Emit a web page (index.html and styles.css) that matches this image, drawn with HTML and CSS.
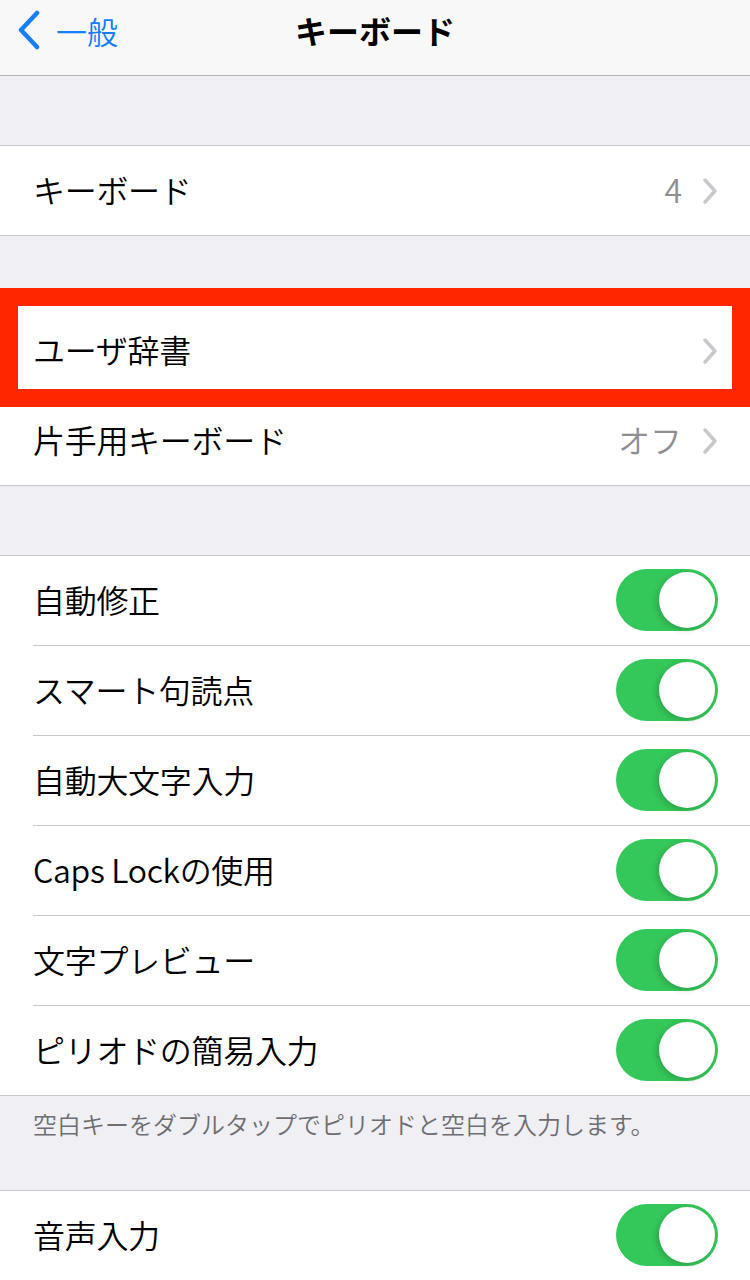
FILE: index.html
```html
<!DOCTYPE html>
<html lang="ja">
<head>
  <meta charset="utf-8">
  <title>キーボード</title>
  <link rel="stylesheet" href="styles.css">
</head>
<body>
  <header class="navbar">
    <div class="back">
      <svg class="back-icon" width="26" height="40" viewBox="0 0 26 40">
        <polyline points="21,3 5,20 21,37" fill="none" stroke="#157efb" stroke-width="4.5" stroke-linecap="round" stroke-linejoin="round"/>
      </svg>
      <span>一般</span>
    </div>
    <div class="title">キーボード</div>
    <div class="spacer"></div>
  </header>

  <div class="gap"></div>
  <ul class="group">
    <li class="row">
      <div class="row-body">
        <span class="label">キーボード</span>
        <span class="value">4</span>
        <svg class="chevron" width="16" height="28" viewBox="0 0 16 28"><polyline points="3,3 13,14 3,25" fill="none" stroke="#c7c7cc" stroke-width="3.5" stroke-linecap="round" stroke-linejoin="round"/></svg>
      </div>
    </li>
  </ul>

  <div class="gap"></div>
  <ul class="group">
    <li class="row highlighted">
      <div class="row-body">
        <span class="label">ユーザ辞書</span>
        <svg class="chevron" width="16" height="28" viewBox="0 0 16 28"><polyline points="3,3 13,14 3,25" fill="none" stroke="#c7c7cc" stroke-width="3.5" stroke-linecap="round" stroke-linejoin="round"/></svg>
      </div>
      <div class="mark"></div>
    </li>
    <li class="row">
      <div class="row-body">
        <span class="label">片手用キーボード</span>
        <span class="value">オフ</span>
        <svg class="chevron" width="16" height="28" viewBox="0 0 16 28"><polyline points="3,3 13,14 3,25" fill="none" stroke="#c7c7cc" stroke-width="3.5" stroke-linecap="round" stroke-linejoin="round"/></svg>
      </div>
    </li>
  </ul>

  <div class="gap"></div>
  <ul class="group">
    <li class="row"><div class="row-body"><span class="label">自動修正</span><span class="toggle"></span></div></li>
    <li class="row"><div class="row-body"><span class="label">スマート句読点</span><span class="toggle"></span></div></li>
    <li class="row"><div class="row-body"><span class="label">自動大文字入力</span><span class="toggle"></span></div></li>
    <li class="row"><div class="row-body"><span class="label">Caps Lockの使用</span><span class="toggle"></span></div></li>
    <li class="row"><div class="row-body"><span class="label">文字プレビュー</span><span class="toggle"></span></div></li>
    <li class="row"><div class="row-body"><span class="label">ピリオドの簡易入力</span><span class="toggle"></span></div></li>
  </ul>
  <p class="footer">空白キーをダブルタップでピリオドと空白を入力します。</p>

  <ul class="group">
    <li class="row"><div class="row-body"><span class="label">音声入力</span><span class="toggle"></span></div></li>
    <li class="row"><div class="row-body"></div></li>
  </ul>
</body>
</html>
```

FILE: styles.css
```css
body {
  margin: 0;
  padding: 0;
  font-family: "Noto Sans CJK JP", "Noto Sans", sans-serif;
  background-color: #efeff4;
  color: #000;
  overflow: hidden;
}

.navbar {
  display: flex;
  align-items: flex-start;
  height: 76px;
  padding-top: 5px;
  box-sizing: border-box;
  background-color: #f8f8f8;
  border-bottom: 1px solid #b2b2b2;
}

.back,
.spacer {
  flex: 1 1 0;
}

.back {
  display: flex;
  align-items: center;
  height: 50px;
  padding-left: 16px;
  color: #147efb;
  font-size: 31px;
  font-weight: 350;
}

.spacer {
  padding-right: 16px;
}

.back-icon {
  margin-right: 14px;
}

.title {
  height: 50px;
  line-height: 50px;
  font-size: 32px;
  font-weight: bold;
}

.gap {
  height: 69px;
}

.group {
  list-style: none;
  margin: 0;
  padding: 0;
  background-color: #fff;
  border-top: 1px solid #c8c7cc;
  border-bottom: 1px solid #c8c7cc;
}

.row {
  position: relative;
  padding-left: 33px;
}

.row-body {
  display: flex;
  align-items: center;
  height: 89px;
  padding-right: 32px;
  border-bottom: 1px solid #c8c7cc;
}

.row:last-child .row-body {
  border-bottom: none;
}

.label {
  flex: 1;
  font-size: 32px;
  font-weight: 350;
  letter-spacing: -0.3px;
  margin-top: -3px;
}

.value {
  font-size: 32px;
  font-weight: 350;
  color: #8e8e93;
  margin-right: 20px;
  margin-top: -3px;
}

.chevron {
  margin-top: 1px;
}

.toggle {
  position: relative;
  width: 102px;
  height: 62px;
  margin-top: -2px;
  border-radius: 31px;
  background-color: #34c759;
}

.toggle::after {
  content: "";
  position: absolute;
  top: 3px;
  right: 3px;
  width: 56px;
  height: 56px;
  border-radius: 50%;
  background-color: #fff;
  box-shadow: -2px 2px 6px rgba(0, 0, 0, 0.18);
}

/* red highlight frame over the row */
.mark {
  position: absolute;
  top: -18px;
  left: 0;
  right: 0;
  height: 119px;
  box-sizing: border-box;
  border: 18px solid #ff2600;
}

.footer {
  margin: 0;
  height: 94px;
  padding: 10px 0 0 33px;
  box-sizing: border-box;
  font-size: 24px;
  font-weight: 350;
  line-height: 36px;
  color: #6d6d72;
}
```
